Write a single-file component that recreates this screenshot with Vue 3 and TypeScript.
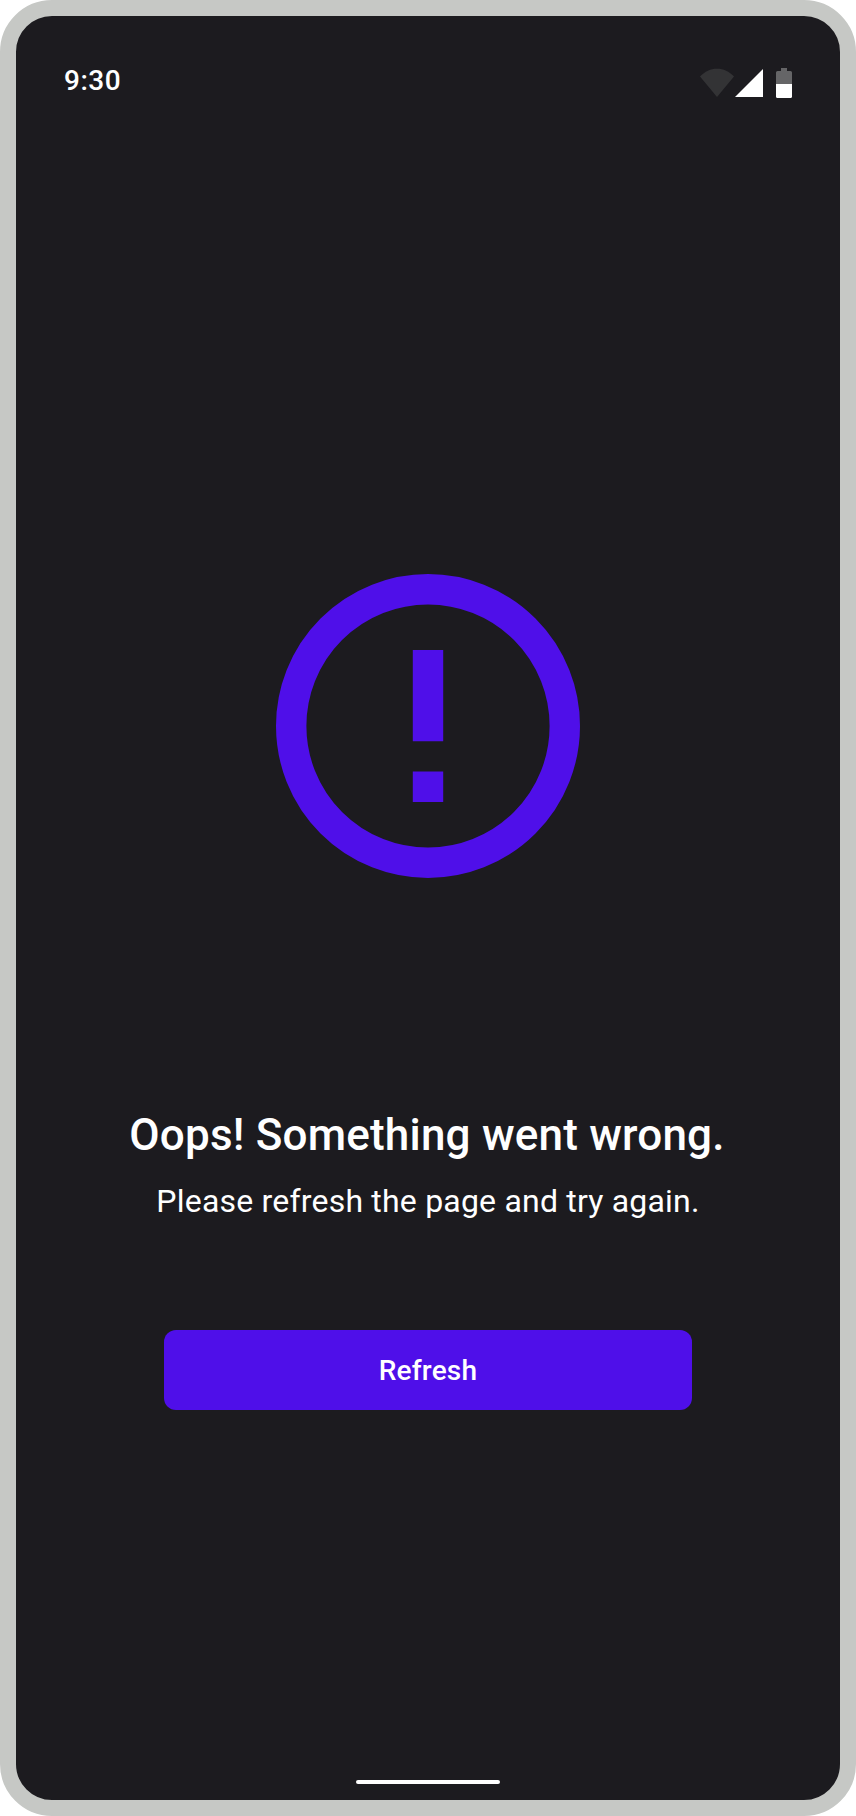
<script setup lang="ts">
import { ref } from 'vue'

const time = ref('9:30')
const title = 'Oops! Something went wrong.'
const message = 'Please refresh the page and try again.'
</script>

<template>
  <div class="device">
    <header class="status-bar">
      <span class="time">{{ time }}</span>
      <svg class="status-icons" width="92" height="30" viewBox="0 0 92 30" aria-hidden="true">
        <path d="M0 8.5C4.8 3.3 10.6 .7 17 .7S29.200 3.300 34 8.500L17 29Z" fill="#333335" />
        <path d="M63 1V29H35Z" fill="#fff" />
        <path d="M76 16V4.500Q76 3 77.500 3H81V0H87V3H90.500Q92 3 92 4.500V16Z" fill="#656567" />
        <path d="M76 16H92V28.500Q92 30 90.500 30H77.500Q76 30 76 28.500Z" fill="#fff" />
      </svg>
    </header>
    <main class="content">
      <svg class="error-icon" viewBox="2 2 20 20" aria-hidden="true">
        <circle cx="12" cy="12" r="9" fill="none" stroke="currentColor" stroke-width="2" />
        <path d="M11 7h2v6h-2zM11 15h2v2h-2z" fill="currentColor" />
      </svg>
      <h1 class="title">{{ title }}</h1>
      <p class="message">{{ message }}</p>
      <button class="refresh" type="button">Refresh</button>
    </main>
    <div class="home-indicator"></div>
  </div>
</template>

<style>
body {
  margin: 0;
  background: #fff;
}
</style>

<style scoped>
.device {
  box-sizing: border-box;
  width: 856px;
  height: 1816px;
  display: flex;
  flex-direction: column;
  align-items: center;
  border: 16px solid #c6c8c5;
  border-radius: 52px;
  background: #1c1b1f;
  color: #fff;
  font-family: Roboto, "Noto Sans", sans-serif;
  overflow: hidden;
}

.status-bar {
  box-sizing: border-box;
  width: 100%;
  height: 104px;
  padding: 45px 48px 11px;
  display: flex;
  align-items: flex-start;
  justify-content: space-between;
}

.time {
  font-size: 28px;
  line-height: 40px;
  font-weight: 500;
  letter-spacing: 0.5px;
}

.status-icons {
  margin-top: 7px;
}

.content {
  flex: 1;
  display: flex;
  flex-direction: column;
  align-items: center;
}

.error-icon {
  width: 304px;
  height: 304px;
  margin-top: 454px;
  color: #4f0fe9;
}

.title {
  margin: 229px 0 0;
  padding-right: 2px;
  font-size: 44px;
  line-height: 56px;
  font-weight: 500;
  letter-spacing: 0.2px;
}

.message {
  margin: 14px 0 0;
  font-size: 32px;
  line-height: 48px;
  letter-spacing: 0.2px;
}

.refresh {
  width: 528px;
  height: 80px;
  margin-top: 105px;
  padding: 2px 0 0;
  border: 0;
  border-radius: 12px;
  background: #4f0fe9;
  color: #fff;
  font-family: inherit;
  font-size: 28px;
  font-weight: 500;
  line-height: 40px;
  letter-spacing: 0.2px;
}

.home-indicator {
  width: 144px;
  height: 4px;
  margin-bottom: 16px;
  border-radius: 2px;
  background: #fff;
}
</style>
